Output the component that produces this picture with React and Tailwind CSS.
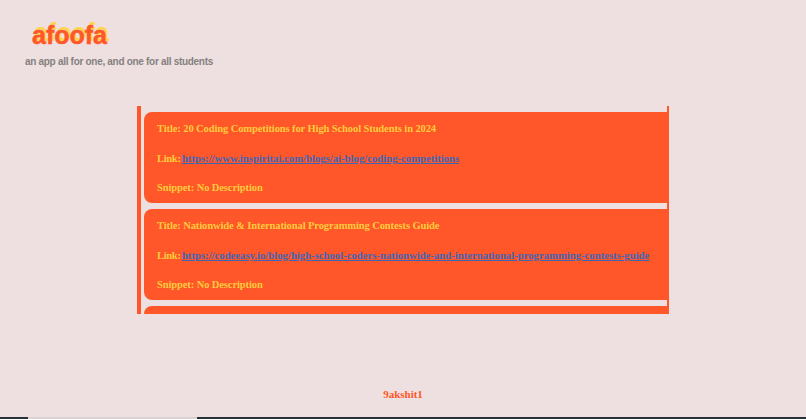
const results = [
  {
    title: "20 Coding Competitions for High School Students in 2024",
    link: "https://www.inspiritai.com/blogs/ai-blog/coding-competitions",
  },
  {
    title: "Nationwide & International Programming Contests Guide",
    link: "https://codeeasy.io/blog/high-school-coders-nationwide-and-international-programming-contests-guide",
  },
];

const ResultCard = ({ title, link }) => (
  <div className="w-[524px] shrink-0 h-[91px] rounded-l-lg bg-[#ff5729] pl-[13px] pt-[11px] flex flex-col gap-[17px] text-[10.5px] tracking-[-0.1px] leading-3 font-bold text-[#ffcb3d] font-['Liberation_Serif',serif] whitespace-nowrap">
    <p>Title: {title}</p>
    <p className="tracking-[-0.3px] [word-spacing:-1px]">
      Link: <a href={link} className="text-[10.7px] tracking-normal text-[#3f66b5] underline">{link}</a>
    </p>
    <p>Snippet: No Description</p>
  </div>
);

export default function App() {
  return (
    <div className="h-[419px] w-[806px] overflow-hidden bg-[#eee0e0] flex flex-col font-['Liberation_Sans',sans-serif]">
      <header className="h-[106px] shrink-0 pl-[25px] pt-[18px]">
        <h1 className="pl-[7px] text-[25px] leading-[34px] font-bold text-[#ff5729] [-webkit-text-stroke:0.5px_#ff5729] [text-shadow:2px_-3px_0_#ffd54f]">
          afoofa
        </h1>
        <p className="mt-[3px] text-[10px] tracking-[-0.3px] leading-[14px] font-bold text-[#85807f]">
          an app all for one, and one for all students
        </p>
      </header>

      <main className="ml-[137px] w-[532px] h-[208px] shrink-0 overflow-hidden border-l-4 border-r-2 border-[#ff5729] pl-[3px] pt-[6px] flex flex-col gap-[6px]">
        {results.map((item) => (
          <ResultCard key={item.title} {...item} />
        ))}
        <div className="w-[524px] shrink-0 h-[91px] rounded-l-lg bg-[#ff5729]" />
      </main>

      <footer className="flex-1 flex justify-center pt-[74px] text-[11px] leading-[12px] font-bold text-[#ff5729] font-['Liberation_Serif',serif]">
        9akshit1
      </footer>

      <div className="h-[2px] shrink-0 flex">
        <div className="w-[28px] bg-[#263238]" />
        <div className="w-[169px] bg-[#d8d2d2]" />
        <div className="flex-1 bg-[#263238]" />
      </div>
    </div>
  );
}
